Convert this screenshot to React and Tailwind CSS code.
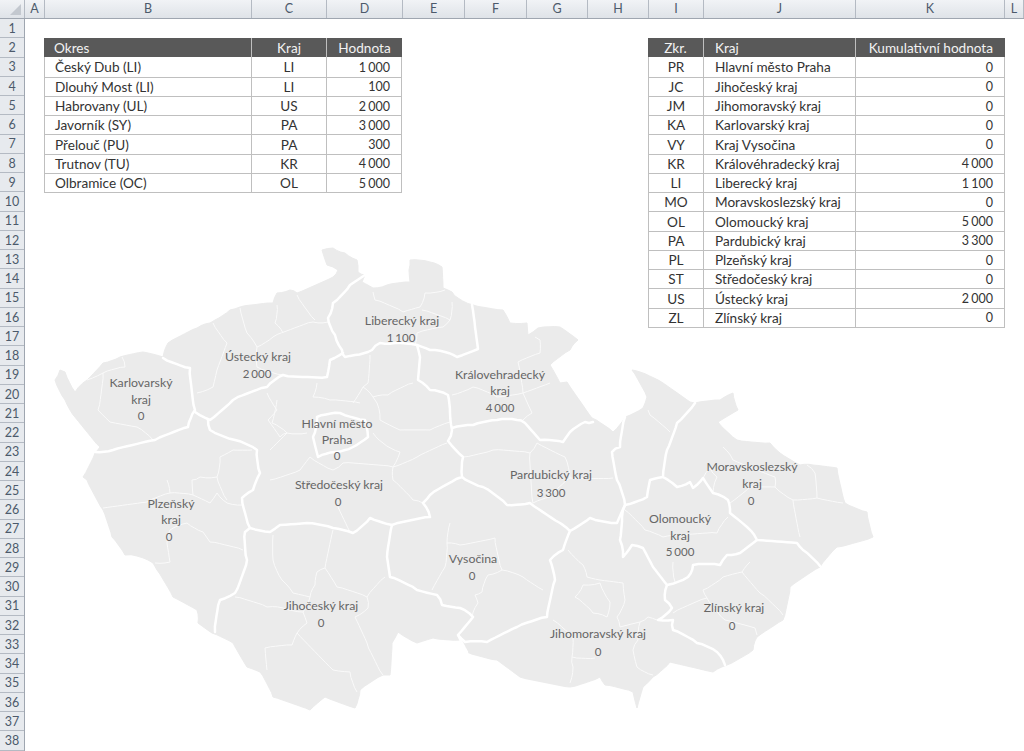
const columns = [
  { name: "A", cls: "w-[20px]" },
  { name: "B", cls: "w-[207px]" },
  { name: "C", cls: "w-[75px]" },
  { name: "D", cls: "w-[76px]" },
  { name: "E", cls: "w-[62px]" },
  { name: "F", cls: "w-[62px]" },
  { name: "G", cls: "w-[61px]" },
  { name: "H", cls: "w-[61px]" },
  { name: "I", cls: "w-[55px]" },
  { name: "J", cls: "w-[152px]" },
  { name: "K", cls: "w-[149px]" },
  { name: "L", cls: "w-[19px]" },
];

const rowNumbers = Array.from({ length: 38 }, (_, i) => i + 1);

const okresy = [
  ["Český Dub (LI)", "LI", "1 000"],
  ["Dlouhý Most (LI)", "LI", "100"],
  ["Habrovany (UL)", "US", "2 000"],
  ["Javorník (SY)", "PA", "3 000"],
  ["Přelouč (PU)", "PA", "300"],
  ["Trutnov (TU)", "KR", "4 000"],
  ["Olbramice (OC)", "OL", "5 000"],
];

const kraje = [
  ["PR", "Hlavní město Praha", "0"],
  ["JC", "Jihočeský kraj", "0"],
  ["JM", "Jihomoravský kraj", "0"],
  ["KA", "Karlovarský kraj", "0"],
  ["VY", "Kraj Vysočina", "0"],
  ["KR", "Královéhradecký kraj", "4 000"],
  ["LI", "Liberecký kraj", "1 100"],
  ["MO", "Moravskoslezský kraj", "0"],
  ["OL", "Olomoucký kraj", "5 000"],
  ["PA", "Pardubický kraj", "3 300"],
  ["PL", "Plzeňský kraj", "0"],
  ["ST", "Středočeský kraj", "0"],
  ["US", "Ústecký kraj", "2 000"],
  ["ZL", "Zlínský kraj", "0"],
];

// obrys republiky
const outline =
  "55,380 60,370 65,372 75,392 87,380 103,363 120,357 143,352 163,357 168,343 197,328 210,323 215,320 230,310 240,307 273,303 277,293 290,290 297,293 333,277 338,270 327,265 322,250 333,248 345,253 357,260 358,272 365,275 362,282 373,288 387,285 410,282 409,270 410,260 430,262 442,267 443,288 452,292 458,298 473,305 503,310 510,323 527,323 528,335 538,328 560,327 578,340 570,350 550,365 560,383 567,382 592,418 613,432 625,417 643,408 647,397 632,370 640,372 663,383 690,402 695,403 720,400 733,393 738,410 718,422 737,440 770,443 780,453 800,465 813,465 837,468 845,503 867,512 873,537 837,547 820,567 790,587 783,620 757,637 753,650 727,665 713,672 670,662 653,677 643,687 637,708 633,692 605,685 600,677 570,687 520,677 497,660 467,652 460,640 433,638 417,643 398,632 392,643 390,675 383,675 360,690 355,708 325,697 310,710 273,697 260,672 247,667 233,643 212,633 198,623 197,610 173,597 157,570 153,563 137,556 125,555 112,537 103,510 87,480 83,477 95,453 100,447 70,410 65,400";

// hranice krajů
const thick = [
  "365,275 350,285 333,303 328,318 335,335 342,350 345,357 355,355 372,350 380,343 395,343 417,345 430,350 445,352 457,357 478,349 475,327 472,305",
  "417,345 420,357 418,380 430,390 448,395 450,413 452,430 448,441 463,457 462,477 430,495 423,503 430,517 392,525 370,518 353,533 333,528 307,523 280,525 270,532 250,528 242,498 253,490 260,473 257,450 235,440 210,430 208,420",
  "452,428 473,425 497,420 517,420 525,423 540,440 563,442 570,432 585,422 593,422",
  "462,477 483,487 507,505 530,503 560,523 570,531 590,518 617,523 625,505 647,497 650,480 663,477",
  "625,417 620,447 612,452 617,480 625,505 622,517 620,540 623,557 632,545 643,548 653,567 667,585",
  "570,531 563,550 550,560 555,580 547,617 517,627 487,642 465,642 458,635 473,617 460,608 442,605 437,595 417,590 390,577 387,557 392,525",
  "458,635 467,652",
  "250,528 245,532 247,560 235,593 220,600 215,632",
  "163,358 190,368 195,410 188,427 155,440 113,450 95,452",
  "195,412 210,420 233,400 267,387 283,375 327,377 330,360 343,353",
  "695,403 677,423 667,450 663,477 677,487 690,482 693,488 703,478 713,493 728,500 730,513 747,527 757,540 797,543 803,550 820,566",
  "757,540 740,553 727,555 720,565 693,565 688,577 667,585 665,600 672,608 658,620 673,620 673,630 697,643 717,652 725,665",
  "313,437 318,457 335,452 353,447 368,437 365,420 340,413 317,417 313,437",
];

// hranice okresů
const thin = [
  "240,308 247,333 257,347 273,337 313,322 328,322",
  "297,295 315,320",
  "277,305 275,323 283,333",
  "213,323 227,343 217,370 213,387 197,393",
  "257,347 257,367 283,375",
  "122,357 125,367 103,373 98,410 110,422 137,427 153,440",
  "87,380 103,373",
  "373,292 375,300 403,312 420,307 425,293 445,290",
  "422,310 450,320 443,327 417,333 415,345",
  "452,302 450,320",
  "370,355 368,383 363,387 373,397 388,395 413,383",
  "373,397 377,403 380,420 400,430 430,430 450,422",
  "353,403 363,387",
  "317,383 313,397 330,400 360,403",
  "452,395 473,387 497,397 523,393 550,383",
  "523,393 532,413 523,420",
  "518,362 540,353 540,340 535,337",
  "518,362 523,393",
  "463,457 493,450 530,453 533,503",
  "530,453 537,443 565,457 570,478 613,478",
  "533,503 550,497 570,478",
  "723,447 733,460 775,477 775,487 793,500 800,537",
  "793,500 817,498 843,503",
  "817,498 815,473 807,465",
  "730,503 750,487 775,487",
  "713,493 717,477 710,468 703,478",
  "648,410 650,415 670,432",
  "625,510 645,530 663,537 717,533 728,517",
  "673,562 675,582",
  "750,562 742,572 723,577 703,590 707,598 673,613",
  "742,572 760,593 783,615",
  "725,620 755,628 757,635",
  "707,598 725,620",
  "568,550 583,565 587,577 600,580 623,583 625,600 617,617 620,627 640,622 648,617 657,620",
  "583,585 575,597 593,613 607,617 610,602 600,583 583,585",
  "640,622 638,640 633,650 637,667 653,675",
  "553,620 573,638 572,657 573,667 570,683",
  "572,657 595,658",
  "450,523 447,543 460,545 495,538 502,570 488,575 482,592 475,595 478,603 472,617",
  "502,570 523,577 543,590",
  "447,543 445,567 432,590",
  "273,535 273,560 282,580 293,593 310,597 315,585 317,572 325,568 333,530",
  "325,568 337,587 367,597 385,577",
  "367,597 368,608 355,617 367,643 383,675",
  "235,597 267,607 283,608 303,612 307,623 297,633 292,645 265,648 267,670",
  "297,633 333,670 350,672 357,692",
  "310,597 303,612",
  "103,508 147,502 170,493 193,495 210,503 217,493 227,503 243,505",
  "187,523 203,532 210,542 243,550",
  "187,523 170,530 167,543 170,562 155,563",
  "193,495 192,480 200,477 217,477 220,457 233,450 252,450",
  "167,480 170,493",
  "217,477 227,500",
  "270,480 300,470 310,457 333,470 343,463 393,467 400,452 383,443 373,433",
  "270,450 287,433 272,423 277,400",
  "267,393 277,410 268,420 280,437 287,433 307,433",
  "393,467 393,480 413,500 423,503",
  "393,467 417,457 447,443",
  "338,507 350,532",
];

const labels = [
  ["Karlovarský", 141, 387],
  ["kraj", 141, 404],
  ["0", 141, 420],
  ["Ústecký kraj", 258, 361],
  ["2 000", 257, 378],
  ["Liberecký kraj", 402, 325],
  ["1 100", 401, 342],
  ["Královehradecký", 500, 379],
  ["kraj", 500, 395],
  ["4 000", 500, 412],
  ["Hlavní město", 337, 428],
  ["Praha", 337, 444],
  ["0", 337, 460],
  ["Středočeský kraj", 339, 489],
  ["0", 338, 506],
  ["Plzeňský", 171, 508],
  ["kraj", 171, 524],
  ["0", 169, 541],
  ["Pardubický kraj", 551, 479],
  ["3 300", 551, 497],
  ["Moravskoslezský", 752, 471],
  ["kraj", 752, 488],
  ["0", 751, 505],
  ["Olomoucký", 680, 523],
  ["kraj", 680, 540],
  ["5 000", 680, 556],
  ["Vysočina", 473, 563],
  ["0", 472, 580],
  ["Jihočeský kraj", 321, 610],
  ["0", 321, 627],
  ["Jihomoravský kraj", 598, 638],
  ["0", 598, 656],
  ["Zlínský kraj", 734, 612],
  ["0", 732, 630],
];

// rozkmitá hranici, aby nebyla rovná jako pravítko
function wiggle(points, amp) {
  const pts = points.split(" ").map((p) => p.split(",").map(Number));
  const out = [];
  for (let i = 0; i < pts.length - 1; i++) {
    const [x1, y1] = pts[i];
    const [x2, y2] = pts[i + 1];
    const len = Math.hypot(x2 - x1, y2 - y1);
    const steps = Math.max(1, Math.round(len / 5));
    for (let s = 0; s < steps; s++) {
      const t = s / steps;
      const n = s === 0 ? 0 : Math.sin(x1 * 12.9 + y1 * 78.2 + s * 37.7) * amp;
      out.push(`${(x1 + (x2 - x1) * t - ((y2 - y1) / len) * n).toFixed(1)},${(y1 + (y2 - y1) * t + ((x2 - x1) / len) * n).toFixed(1)}`);
    }
  }
  out.push(pts[pts.length - 1].join(","));
  return out.join(" ");
}

function cellRow(i) {
  return i > 0
    ? "flex h-[19.25px] items-center leading-none border-t border-[#bfbfbf]"
    : "flex h-[19.25px] items-center leading-none";
}

function Num({ children }) {
  return <span className="text-[12.5px] [word-spacing:-1px]">{children}</span>;
}

function OkresTable() {
  return (
    <div className="w-[358px] border-x border-b border-[#bfbfbf] text-[13.6px] text-[#333]">
      <div className="-mx-px flex h-[19.25px] items-center bg-[#595959] leading-none text-[#f2f2f2]">
        <div className="flex h-full w-[208px] items-center border-r border-[#bfbfbf] pl-[10px] pt-[2px]">Okres</div>
        <div className="flex h-full w-[75px] items-center justify-center border-r border-[#bfbfbf] pt-[2px]">Kraj</div>
        <div className="flex h-full flex-1 items-center justify-center pt-[2px]">Hodnota</div>
      </div>
      {okresy.map((r, i) => (
        <div key={r[0]} className={cellRow(i)}>
          <div className="flex h-full w-[207px] items-center border-r border-[#bfbfbf] pl-[10px] pt-[2px]">{r[0]}</div>
          <div className="flex h-full w-[75px] items-center justify-center border-r border-[#bfbfbf] pt-[2px]">{r[1]}</div>
          <div className="flex h-full flex-1 items-center justify-end pr-[11px] pt-[2px]"><Num>{r[2]}</Num></div>
        </div>
      ))}
    </div>
  );
}

function KrajTable() {
  return (
    <div className="w-[357px] border-x border-b border-[#bfbfbf] text-[13.6px] text-[#333]">
      <div className="-mx-px flex h-[19.25px] items-center bg-[#595959] leading-none text-[#f2f2f2]">
        <div className="flex h-full w-[56px] items-center justify-center border-r border-[#bfbfbf] pt-[2px]">Zkr.</div>
        <div className="flex h-full w-[152px] items-center border-r border-[#bfbfbf] pl-[11px] pt-[2px]">Kraj</div>
        <div className="flex h-full flex-1 items-center justify-end pr-[12px] pt-[2px]">Kumulativní hodnota</div>
      </div>
      {kraje.map((r, i) => (
        <div key={r[0]} className={cellRow(i)}>
          <div className="flex h-full w-[55px] items-center justify-center border-r border-[#bfbfbf] pt-[2px]">{r[0]}</div>
          <div className="flex h-full w-[152px] items-center border-r border-[#bfbfbf] pl-[11px] pt-[2px]">{r[1]}</div>
          <div className="flex h-full flex-1 items-center justify-end pr-[11px] pt-[2px]"><Num>{r[2]}</Num></div>
        </div>
      ))}
    </div>
  );
}

function CzechMap() {
  return (
    <svg className="absolute left-0 top-0 h-[751px] w-[1024px]" viewBox="0 0 1024 751">
      <polygon points={wiggle(outline + " 55,380", 0.8)} fill="#ebebeb" stroke="#ebebeb" strokeWidth="1" strokeLinejoin="round" />
      {thin.map((p) => (
        <polyline key={p} points={wiggle(p, 0.9)} fill="none" stroke="#fafafa" strokeWidth="1" strokeLinejoin="round" />
      ))}
      {thick.map((p) => (
        <polyline key={p} points={wiggle(p, 1)} fill="none" stroke="#ffffff" strokeWidth="2.5" strokeLinejoin="round" strokeLinecap="round" />
      ))}
      {labels.map(([text, x, y]) => {
        const isNumber = /^[0-9 ]+$/.test(text);
        return (
          <text
            key={text + x + y}
            x={x}
            y={y}
            textAnchor="middle"
            fill="#666666"
            fontSize={isNumber ? 11.5 : 12.3}
            wordSpacing={isNumber ? -1 : 0}
          >
            {text}
          </text>
        );
      })}
    </svg>
  );
}

export default function App() {
  return (
    <div className="relative h-[751px] w-[1024px] overflow-hidden bg-white font-['Lato',sans-serif]">
      {/* hlavička sloupců */}
      <div className="flex h-[19px] border-b border-[#9fa6b0] bg-gradient-to-b from-[#f1f3f6] to-[#dfe3e8]">
        <div className="relative w-[25px] shrink-0 border-r border-[#b4bac3]">
          <div className="absolute bottom-[3px] right-[3px] h-0 w-0 border-b-[11px] border-l-[11px] border-b-[#c3c8cf] border-l-transparent" />
        </div>
        {columns.map((c) => (
          <div
            key={c.name}
            className={`${c.cls} flex shrink-0 items-center justify-center border-r border-[#b4bac3] text-[12.5px] leading-none text-[#4c5a6b]`}
          >
            {c.name}
          </div>
        ))}
      </div>
      <div className="flex">
        {/* čísla řádků */}
        <div className="w-[25px] shrink-0 border-r border-[#9fa6b0] bg-[#e7eaee]">
          {rowNumbers.map((n) => (
            <div
              key={n}
              className="flex h-[19.25px] items-center justify-center border-b border-[#b4bac3] pt-[2px] text-[12.5px] leading-none text-[#4c5a6b]"
            >
              {n}
            </div>
          ))}
        </div>
        <div className="flex flex-1 items-start justify-between pl-[19px] pr-[19px] pt-[19px]">
          <OkresTable />
          <KrajTable />
        </div>
      </div>
      <CzechMap />
    </div>
  );
}
